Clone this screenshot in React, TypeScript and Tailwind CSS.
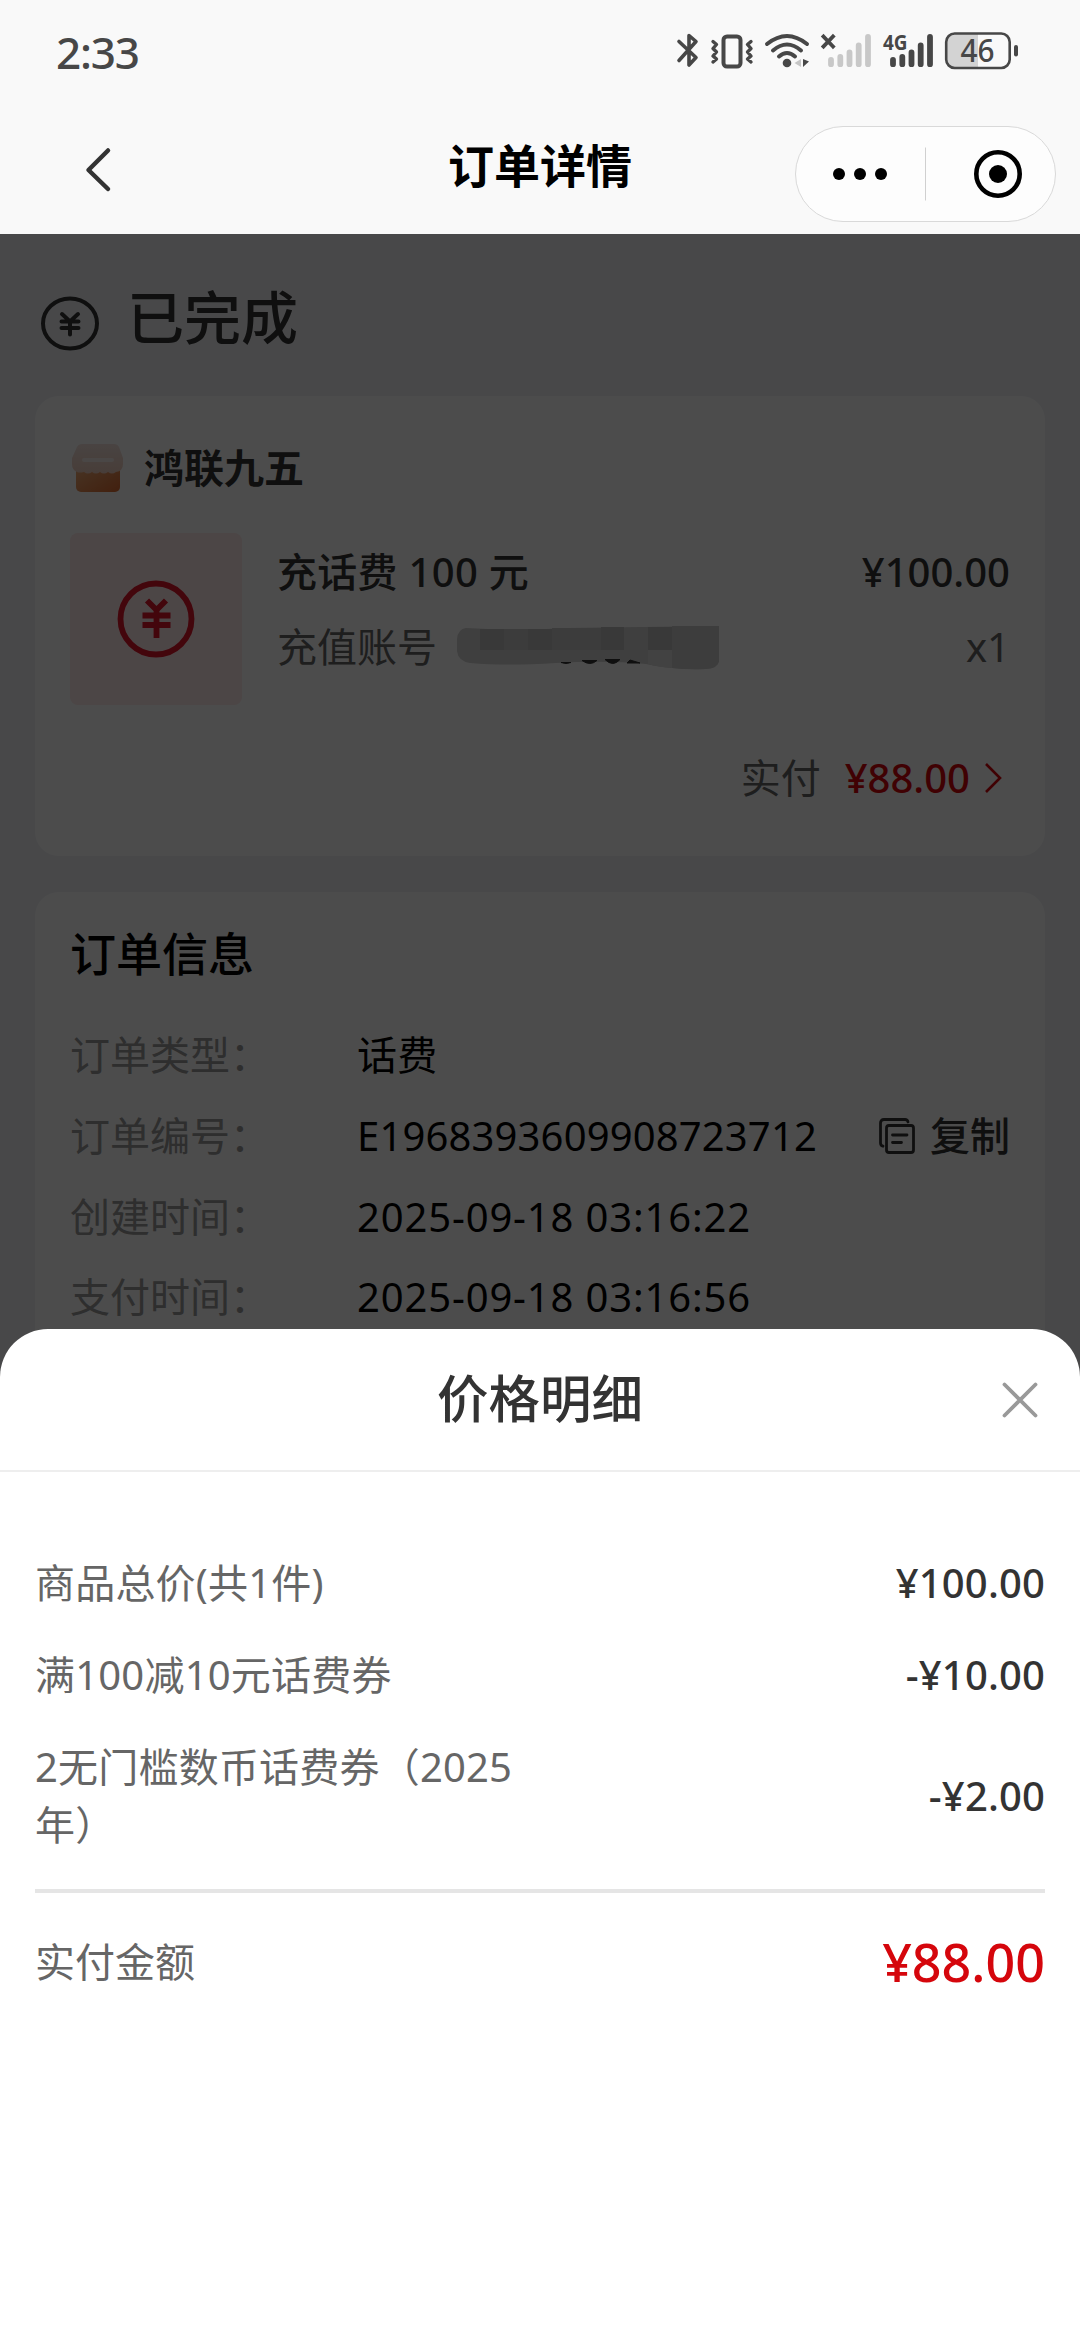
import React from 'react';

const orderInfo = [
  { label: '订单类型：', value: '话费' },
  { label: '订单编号：', value: 'E1968393609908723712', copy: true },
  { label: '创建时间：', value: '2025-09-18 03:16:22', time: true },
  { label: '支付时间：', value: '2025-09-18 03:16:56', time: true },
];

const priceRows = [
  { label: '商品总价(共1件)', value: '¥100.00' },
  { label: '满100减10元话费券', value: '-¥10.00' },
  { label: '2无门槛数币话费券（2025年）', value: '-¥2.00' },
];

function StatusBar() {
  return (
    <div className="h-[104px] flex items-center justify-between pl-[56px] text-[#474747]">
      <span className="text-[44px] leading-none tracking-[-1.2px] font-medium">2:33</span>
      <svg width="400" height="90" viewBox="0 0 400 90" className="mr-[20px] mt-[6px]">
        {/* bluetooth */}
        <path d="M19 31.500 L36 47.500 L29 55 V25.500 L36 31.500 L19 50.500" fill="none" stroke="#474747" strokeWidth="3.600" strokeLinecap="round" strokeLinejoin="round" />
        {/* vibrate */}
        <rect x="63.500" y="26.500" width="17" height="30" rx="3.500" fill="none" stroke="#474747" strokeWidth="4" />
        <path d="M53 31.500l3.500 3-3.500 4 3.500 3.500-3.500 4 3.500 3-3.500 3M91 31.500l-3.500 3 3.500 4-3.500 3.500 3.500 4-3.500 3 3.500 3" fill="none" stroke="#474747" strokeWidth="3.400" strokeLinejoin="round" strokeLinecap="round" />
        {/* wifi */}
        <g fill="none" stroke="#474747" strokeWidth="4" strokeLinecap="round">
          <path d="M107 34 Q127 18 147 34" />
          <path d="M113 40.500 Q127 28.500 141 40.500" />
          <path d="M119 46.500 Q127 39.500 135 46.500" />
        </g>
        <circle cx="127" cy="53" r="4.300" fill="#474747" />
        <path d="M141 49v8l-6.500-4z" fill="#c6c6c6" />
        <path d="M143 49v8l6-5.500z" fill="#474747" />
        {/* sim 1, no service */}
        <path d="M163.500 26.500l9.500 10M173 26.500l-9.500 10" stroke="#474747" strokeWidth="3.800" strokeLinecap="square" />
        <g stroke="#c8c8c8" strokeWidth="5.800" strokeLinecap="round">
          <path d="M171 50v4.200M180.300 47v7.200M189.500 42.500v11.700M198.700 35.500v18.700M208 27v27.200" />
        </g>
        {/* sim 2 */}
        <text x="223" y="40" fontSize="22" fontWeight="700" fill="#474747" textLength="24.500" lengthAdjust="spacingAndGlyphs">4G</text>
        <g stroke="#474747" strokeWidth="5.800" strokeLinecap="round">
          <path d="M233 50v4.200M242.300 47v7.200M251.500 42.500v11.700M260.700 35.500v18.700M270 27v27.200" />
        </g>
        {/* battery */}
        <path d="M294 24h24v34h-24q-7.500 0-7.500-7.500v-19q0-7.500 7.500-7.500z" fill="#d3d3d3" />
        <rect x="286.200" y="23.500" width="63.500" height="34.500" rx="8.500" fill="none" stroke="#474747" strokeWidth="2.600" />
        <rect x="354" y="35" width="4" height="11.500" rx="2" fill="#474747" />
        <text x="300.500" y="51.800" fontSize="32" fontWeight="500" fill="#474747" textLength="34" lengthAdjust="spacingAndGlyphs">46</text>
      </svg>
    </div>
  );
}

function NavBar() {
  return (
    <div className="h-[130px] flex items-start">
      <div className="w-[330px] pt-[42px] pl-[84px]">
        <svg width="30" height="48" viewBox="0 0 30 48" fill="none" stroke="#333" strokeWidth="4.500" strokeLinecap="round" strokeLinejoin="round">
          <path d="M24 4.500 4.500 24 24 43" />
        </svg>
      </div>
      <h1 className="flex-1 pt-[28px] text-center text-[46px] leading-[66px] font-bold text-black">订单详情</h1>
      <div className="w-[330px] pt-[22px] pl-[45px]">
        <div className="w-[261px] h-[96px] rounded-full border border-[#d9d9d9] bg-[#fdfdfd]">
          <svg width="259" height="94" viewBox="0 0 259 94">
            <circle cx="43" cy="47" r="6" />
            <circle cx="64" cy="47" r="6" />
            <circle cx="85" cy="47" r="6" />
            <path d="M129.500 20.500v53" stroke="#d0d0d0" />
            <circle cx="202" cy="47" r="21.700" fill="none" stroke="#000" strokeWidth="4.600" />
            <circle cx="202" cy="47" r="9" />
          </svg>
        </div>
      </div>
    </div>
  );
}

function ShopIcon() {
  return (
    <svg width="56" height="56" viewBox="0 0 56 56">
      <defs>
        <linearGradient id="roof" x1="0" y1="0" x2="0" y2="1">
          <stop offset="0" stopColor="#f3e2dd" />
          <stop offset="1" stopColor="#efcdbd" />
        </linearGradient>
        <linearGradient id="base" x1="0" y1="0" x2="1" y2="1">
          <stop offset="0" stopColor="#eeb07c" />
          <stop offset="1" stopColor="#dc6a30" />
        </linearGradient>
      </defs>
      <rect x="6" y="24" width="44" height="28" rx="5" fill="url(#base)" />
      <path d="M12 4h32q3.500 0 5 3l4 11v6q0 7-7 8-4 3-8 0-4 3-8 0-4 3-8 0-4 3-8 0-5 1-7 0-5-2-5-8v-6L7 7q1.500-3 5-3z" fill="url(#roof)" />
      <rect x="12" y="18" width="32" height="4" rx="2" fill="#fff" fillOpacity="0.6" />
    </svg>
  );
}

function CopyIcon() {
  return (
    <svg width="36" height="36" viewBox="0 0 36 36" fill="none" stroke="#333" strokeWidth="2.800" strokeLinecap="round" strokeLinejoin="round">
      <path d="M29 4q-.5-2.500-3-2.500H5Q1.500 1.500 1.500 5v20q0 2.500 2.500 3.200" />
      <rect x="7.500" y="7.500" width="27" height="27" rx="2.500" />
      <path d="M13.500 17h14.500M13.500 24.500h9" />
    </svg>
  );
}

// Pixelated smudge over the account number
function MaskedAccount() {
  return (
    <svg width="266" height="60" viewBox="0 0 266 60" className="ml-[19px] -mt-[8px]">
      <path d="M10 15Q60 18 110 15 L263 13 V48 Q262 55 250 56 Q215 57 190 51 Q150 47 100 50 Q50 53 14 50 Q2 48 1 38 V26 Q2 16 10 15z" fill="#d2d2d2" />
      <path d="M24 16h24v21H24zM72 16h24v21H72zM145 14h23v23h-23zM192 14h24v23h-24z" fill="#c0c0c0" />
      <path d="M48 16h24v21H48zM96 15h49v22H96z" fill="#cacaca" />
      <path d="M192 37h24v18q-14-1-24-4z" fill="#dcdcdc" />
      <path d="M216 13h47v35q-1 7-13 8-18 1-34-1z" fill="#cbcbcb" />
      <path d="M105 49.500q5 2 10 0zM126 47.500q8 6 15 0zM149 46.500q8 8 15 0zM171 50l3-3 10 3z" fill="#333" stroke="#333" />
    </svg>
  );
}

function OrderPage() {
  return (
    <div className="px-[35px] h-full overflow-hidden">
      <div className="h-[162px] flex items-start pt-[48px] pl-[5px]">
        <svg width="60" height="60" viewBox="0 0 60 60" className="mt-[12px]" fill="none" stroke="#333" strokeWidth="4" strokeLinecap="round">
          <ellipse cx="30" cy="29.500" rx="27" ry="25" />
          <path d="M22 20l8 7.500 8-7.500M30 27.500v13M21.500 27.500h17M21.500 34h17" />
        </svg>
        <h2 className="ml-[27px] text-[57px] leading-[70px] font-medium text-[#333]">已完成</h2>
      </div>

      <div className="h-[460px] rounded-[24px] bg-white px-[35px] pt-[42px]">
        <div className="flex items-center h-[60px]">
          <ShopIcon />
          <span className="ml-[18px] text-[40px] leading-[60px] font-bold text-[#333]">鸿联九五</span>
        </div>
        <div className="flex mt-[35px]">
          <div className="w-[172px] h-[172px] rounded-[8px] bg-[#ffe9e9] flex items-center justify-center">
            <svg width="80" height="80" viewBox="0 0 80 80" fill="none" stroke="#e0142a" strokeWidth="5.800">
              <circle cx="40" cy="40" r="35.500" />
              <path d="M31 21.500l9.500 9.500 9.500-9.500M40.500 31v28M26.500 36.500h28M26.500 46h28" />
            </svg>
          </div>
          <div className="flex-1 pl-[35px] pt-[9px]">
            <div className="flex justify-between text-[40px] leading-[60px] font-medium text-[#333]">
              <span className="tracking-[0.3px]">充话费 100 元</span>
              <span>¥100.00</span>
            </div>
            <div className="flex justify-between items-center mt-[15px] text-[40px] leading-[60px] text-[#666]">
              <div className="flex items-center">
                <span>充值账号</span>
                <MaskedAccount />
              </div>
              <span>x1</span>
            </div>
          </div>
        </div>
        <div className="flex items-center justify-end mt-[43px] pr-[8px] text-[40px] leading-[60px]">
          <span className="text-[#666]">实付</span>
          <span className="ml-[24px] font-medium text-[#d5060c]">¥88.00</span>
          <svg width="18" height="32" viewBox="0 0 18 32" className="ml-[14px]" fill="none" stroke="#d5060c" strokeWidth="2.600">
            <path d="M2 2l14 14L2 30" />
          </svg>
        </div>
      </div>

      <div className="mt-[36px] h-[600px] rounded-[24px] bg-white px-[35px] pt-[28px]">
        <h3 className="text-[46px] leading-[66px] font-medium text-black">订单信息</h3>
        <div className="mt-[29px]">
          {orderInfo.map(item => (
            <div key={item.label} className="h-[80.700px] flex items-center text-[40px] leading-[60px]">
              <span className="w-[287px] text-[#999]">{item.label}</span>
              <span className={item.time ? 'flex-1 text-black tracking-[0.85px]' : 'flex-1 text-black tracking-[0.15px]'}>
                {item.value}
              </span>
              {item.copy && (
                <span className="flex items-center gap-[15px] font-medium text-[#333]">
                  <CopyIcon />
                  复制
                </span>
              )}
            </div>
          ))}
        </div>
      </div>
    </div>
  );
}

function PriceSheet() {
  return (
    <div className="absolute left-0 right-0 bottom-0 h-[1011px] rounded-t-[48px] bg-white">
      <div className="h-[143px] flex items-center border-b-2 border-[#eee]">
        <div className="w-[120px]" />
        <h2 className="flex-1 pb-[4px] text-center text-[51.500px] leading-[76px] font-medium text-[#333]">价格明细</h2>
        <div className="w-[120px] pl-[41px]">
          <svg width="38" height="38" viewBox="0 0 38 38" fill="none" stroke="#999" strokeWidth="3.800" strokeLinecap="round">
            <path d="M3.500 3.500l31 31M34.500 3.500l-31 31" />
          </svg>
        </div>
      </div>
      <div className="px-[35px] pt-[82px]">
        <div className="flex flex-col gap-[34px]">
          {priceRows.map(row => (
            <div key={row.label} className="flex items-center justify-between text-[40px] leading-[58px]">
              <span className="max-w-[500px] text-[#666] tracking-[0.2px]">{row.label}</span>
              <span className="font-medium text-[#333] tracking-[0.15px]">{row.value}</span>
            </div>
          ))}
        </div>
        <div className="mt-[35px] h-[4px] bg-[#e5e5e5]" />
        <div className="mt-[31px] flex items-center justify-between h-[76px]">
          <span className="text-[40px] leading-[58px] text-[#666]">实付金额</span>
          <span className="text-[52px] leading-[76px] font-medium text-[#d5060c]">¥88.00</span>
        </div>
      </div>
    </div>
  );
}

export default function App() {
  return (
    <div className="relative w-[1080px] h-[2340px] overflow-hidden bg-[#f9f9f9] font-['Noto_Sans','Noto_Sans_CJK_SC',sans-serif]">
      <StatusBar />
      <NavBar />
      <div className="relative h-[2106px] bg-[#f0f2f6]">
        <OrderPage />
        <div className="absolute inset-0 bg-black/70" />
      </div>
      <PriceSheet />
    </div>
  );
}
